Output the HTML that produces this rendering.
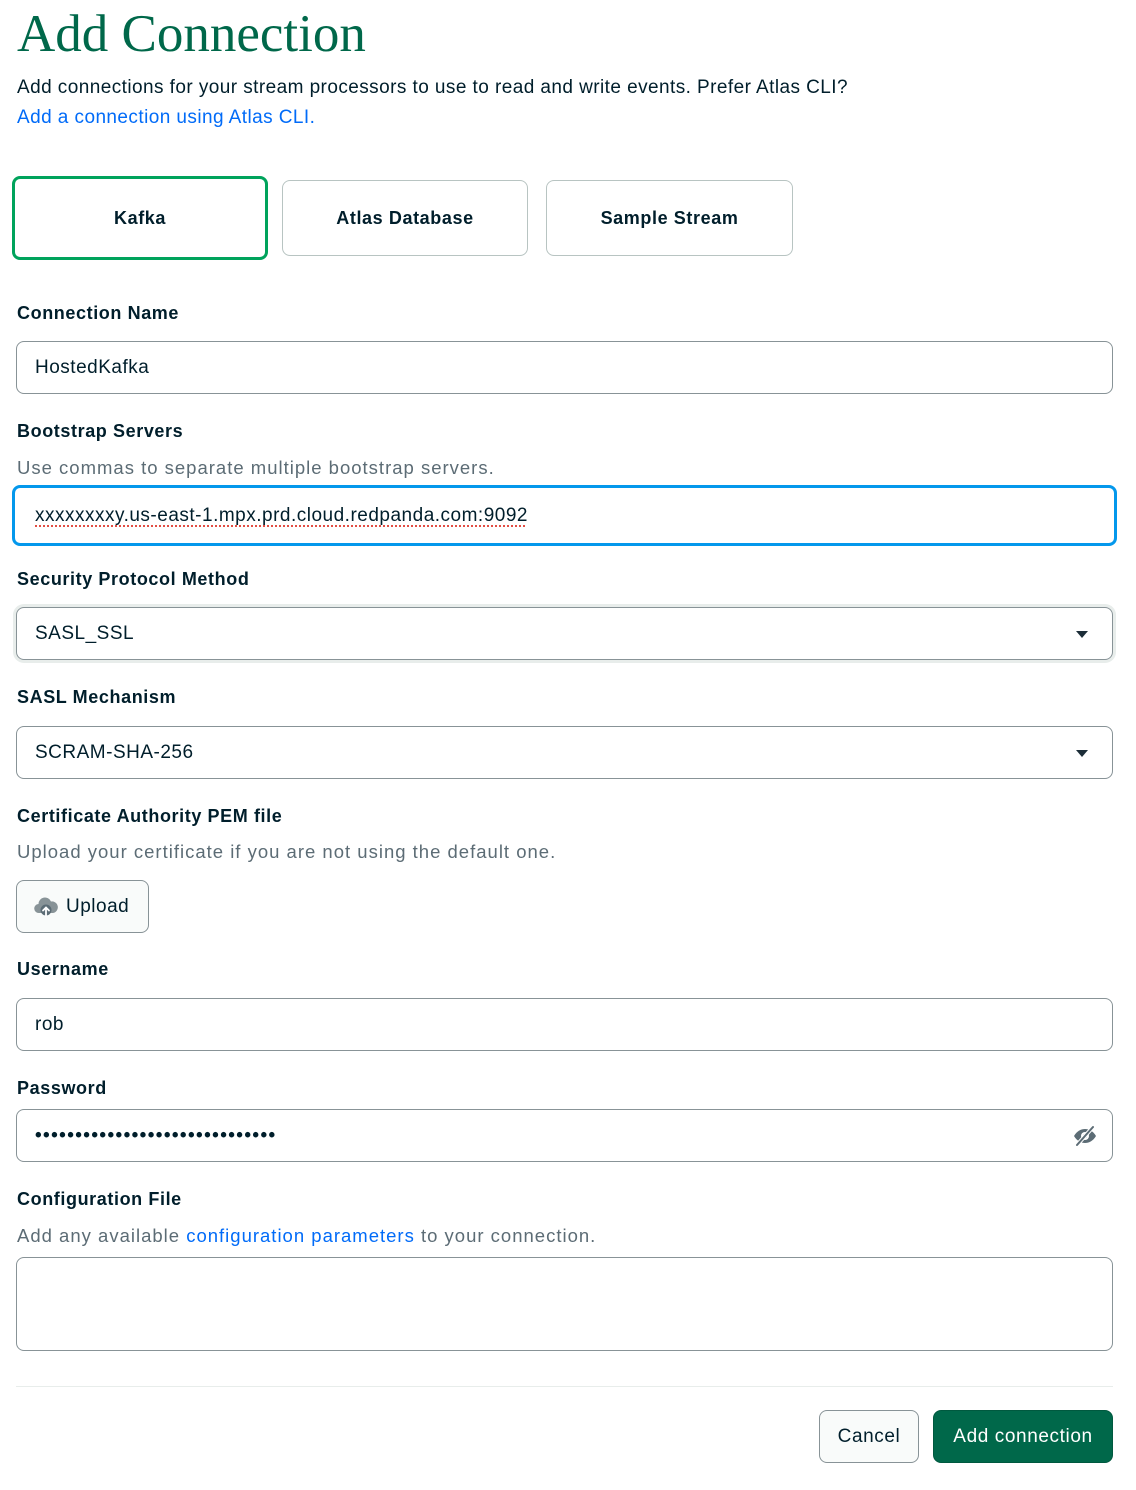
<!DOCTYPE html>
<html><head><meta charset="utf-8"><style>
*{box-sizing:border-box;margin:0;padding:0}
body{width:1136px;height:1490px;background:#fff;font-family:"Liberation Sans",sans-serif;color:#001E2B;position:relative;overflow:hidden}
.a{position:absolute;white-space:nowrap}
h1{position:absolute;left:17px;top:4px;font-family:"Liberation Serif",serif;font-weight:400;font-size:53px;color:#00684A;white-space:nowrap}
.t{font-size:19px;line-height:24px;letter-spacing:0.43px}
.lbl{font-size:18px;font-weight:700;line-height:22px;letter-spacing:0.6px}
.help{font-size:18.5px;color:#5C6C75;line-height:22px;letter-spacing:1px}
.link{color:#016BF8}
.box{position:absolute;border:1px solid #889397;border-radius:8px;background:#fff}
.in{position:absolute;left:16px;width:1097px;height:53px;border:1px solid #889397;border-radius:8px;font-size:19px;padding-left:18px;line-height:51px;letter-spacing:0.5px}
.tab{position:absolute;top:180px;height:76px;border:1px solid #B8C4C2;border-radius:8px;font-weight:700;font-size:18px;text-align:center;line-height:74px;letter-spacing:0.6px}
.caret{position:absolute;right:24px;top:23px;width:0;height:0;border-left:6px solid transparent;border-right:6px solid transparent;border-top:7px solid #1C2D38}
.btn{position:absolute;top:1410px;height:53px;border-radius:8px;font-size:19px;text-align:center;line-height:51px;font-weight:500;letter-spacing:0.6px}
</style></head><body>
<h1>Add Connection</h1>
<div class="a t" style="left:17px;top:76px">Add connections for your stream processors to use to read and write events. Prefer Atlas CLI?</div>
<div class="a t link" style="left:17px;top:106px">Add a connection using Atlas CLI.</div>

<div class="tab" style="left:12px;top:176px;width:256px;height:84px;border:3px solid #00A35C;line-height:78px">Kafka</div>
<div class="tab" style="left:282px;width:246px">Atlas Database</div>
<div class="tab" style="left:546px;width:247px">Sample Stream</div>

<div class="a lbl" style="left:17px;top:302px">Connection Name</div>
<div class="in" style="top:341px">HostedKafka</div>

<div class="a lbl" style="left:17px;top:420px">Bootstrap Servers</div>
<div class="a help" style="left:17px;top:457px">Use commas to separate multiple bootstrap servers.</div>
<div class="in" style="left:12px;width:1105px;top:485px;height:61px;border:3px solid #0498EC;padding-left:20px;line-height:55px"><span style="text-decoration:underline dotted #E0453A;text-underline-offset:5px">xxxxxxxxy.us-east-1.mpx.prd.cloud.redpanda.com:9092</span></div>

<div class="a lbl" style="left:17px;top:568px">Security Protocol Method</div>
<div class="in" style="top:607px;box-shadow:0 0 0 3px #E8EDEB">SASL_SSL<div class="caret"></div></div>

<div class="a lbl" style="left:17px;top:686px">SASL Mechanism</div>
<div class="in" style="top:726px">SCRAM-SHA-256<div class="caret"></div></div>

<div class="a lbl" style="left:17px;top:805px">Certificate Authority PEM file</div>
<div class="a help" style="left:17px;top:841px">Upload your certificate if you are not using the default one.</div>
<div class="box" style="left:16px;top:880px;width:133px;height:53px;background:#F9FBFA;font-size:19px;font-weight:500;line-height:51px;padding-left:49px;letter-spacing:0.5px">Upload
<svg style="position:absolute;left:17px;top:15px" width="24" height="22" viewBox="0 0 24 22"><path d="M6 17H5a4.5 4.5 0 0 1-.5-9A6.5 6.5 0 0 1 17 5.5 5 5 0 0 1 19 17h-1" fill="#889397"/><circle cx="12" cy="14" r="5.5" fill="#5C6C75"/><path d="M12 20v-8M9 14.5l3-3 3 3" stroke="#fff" stroke-width="1.8" fill="none" stroke-linecap="round"/></svg></div>

<div class="a lbl" style="left:17px;top:958px">Username</div>
<div class="in" style="top:998px">rob</div>

<div class="a lbl" style="left:17px;top:1077px">Password</div>
<div class="in" style="top:1109px;letter-spacing:1.4px;font-size:19px;font-weight:700">••••••••••••••••••••••••••••••
<svg style="position:absolute;right:14px;top:14px" width="26" height="24" viewBox="0 0 26 24"><path d="M2 12c3-5 7-7 11-7s8 2 11 7c-3 5-7 7-11 7S5 17 2 12z" fill="#5C6C75"/><circle cx="13" cy="12" r="4" fill="#fff"/><circle cx="13" cy="12" r="2" fill="#5C6C75"/><path d="M5 21L21 3" stroke="#fff" stroke-width="4"/><path d="M5 21L21 3" stroke="#5C6C75" stroke-width="2" stroke-linecap="round"/></svg></div>

<div class="a lbl" style="left:17px;top:1188px">Configuration File</div>
<div class="a help" style="left:17px;top:1225px">Add any available <span class="link">configuration parameters</span> to your connection.</div>
<div class="box" style="left:16px;top:1257px;width:1097px;height:94px"></div>

<div class="a" style="left:16px;top:1386px;width:1097px;height:1px;background:#E8EDEB"></div>
<div class="btn" style="left:819px;width:100px;border:1px solid #889397;background:#F9FBFA">Cancel</div>
<div class="btn" style="left:933px;width:180px;background:#00684A;color:#fff;border:1px solid #00593F">Add connection</div>
</body></html>
